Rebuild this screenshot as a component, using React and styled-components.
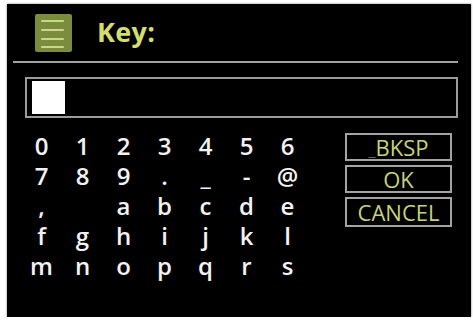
import React from 'react';
import styled, { createGlobalStyle } from 'styled-components';

const GlobalStyle = createGlobalStyle`
    html, body {
        margin: 0;
        padding: 0;
        background: #ffffff;
    }
`;

const Screen = styled.div`
    margin: 4px 0 0 7px;
    width: 464px;
    height: 313px;
    background: #000;
    box-shadow: 0 0 2px rgba(0, 0, 0, 0.5);
    font-family: "Open Sans", "DejaVu Sans", sans-serif;
    display: flex;
    flex-direction: column;
    overflow: hidden;
`;

const Header = styled.div`
    height: 57px;
    display: flex;
    align-items: center;
    padding-left: 28px;
    gap: 25px;
`;

const Title = styled.div`
    color: #d3de6e;
    font-size: 27px;
    font-weight: 700;
    margin-top: -2px;
    letter-spacing: 0.3px;
`;

const Divider = styled.div`
    margin-left: 6px;
    width: 445px;
    height: 2px;
    background: #a2a2a2;
`;

const InputBox = styled.div`
    margin: 14px 0 0 18px;
    width: 424px;
    height: 37px;
    border: 2px solid #9c9c9c;
    display: flex;
    align-items: center;
    padding-left: 5px;
`;

const Cursor = styled.div`
    width: 33px;
    height: 33px;
    background: #fff;
`;

const Body = styled.div`
    display: flex;
    margin-top: 13px;
    padding-left: 14px;
`;

const Keys = styled.div`
    display: grid;
    grid-template-columns: repeat(7, 41px);
    grid-auto-rows: 30px;
`;

const Key = styled.span`
    color: #f2f2f2;
    font-size: 24px;
    font-weight: 600;
    line-height: 30px;
    text-align: center;
`;

const Actions = styled.div`
    margin-left: 37px;
    margin-top: 2px;
    display: flex;
    flex-direction: column;
    gap: 4px;
`;

const Action = styled.div`
    width: 103px;
    height: ${({ tall }) => (tall ? 26 : 24)}px;
    border: 2px solid #a4a4a4;
    color: #c6d27c;
    font-size: 22px;
    line-height: ${({ tall }) => (tall ? 26 : 24)}px;
    text-align: center;
    white-space: nowrap;
`;

const Under = styled.span`
    color: #6b6b4a;
    font-size: 16px;
`;

function MenuIcon() {
    return (
        <svg width="37" height="38" viewBox="0 0 37 38">
            <rect x="0" y="0" width="37" height="38" rx="2" fill="#7b8c3c" />
            <g stroke="#c9d68c" strokeWidth="2.2" strokeLinecap="round">
                <line x1="7" y1="7" x2="28" y2="7" />
                <line x1="7" y1="16" x2="28" y2="16" />
                <line x1="7" y1="25" x2="28" y2="25" />
                <line x1="7" y1="33" x2="28" y2="33" />
            </g>
        </svg>
    );
}

const rows = [
    ['0', '1', '2', '3', '4', '5', '6'],
    ['7', '8', '9', '.', '_', '-', '@'],
    [',', ' ', 'a', 'b', 'c', 'd', 'e'],
    ['f', 'g', 'h', 'i', 'j', 'k', 'l'],
    ['m', 'n', 'o', 'p', 'q', 'r', 's'],
];

export default function App() {
    return (
        <>
            <GlobalStyle />
            <Screen>
                <Header>
                    <MenuIcon />
                    <Title>Key:</Title>
                </Header>
                <Divider />
                <InputBox>
                    <Cursor />
                </InputBox>
                <Body>
                    <Keys>
                        {rows.flat().map((k, i) => (
                            <Key key={i}>{k}</Key>
                        ))}
                    </Keys>
                    <Actions>
                        <Action><Under>_</Under>BKSP</Action>
                        <Action>OK</Action>
                        <Action tall>CANCEL</Action>
                    </Actions>
                </Body>
            </Screen>
        </>
    );
}
